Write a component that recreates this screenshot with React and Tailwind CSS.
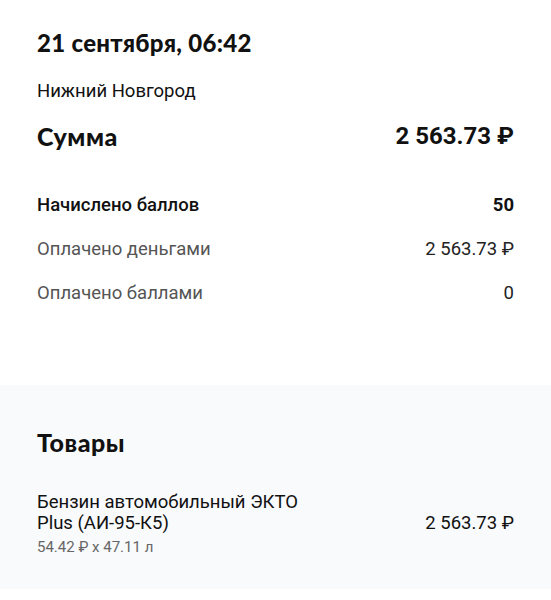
import React from 'react';

const rows = [
  { label: 'Начислено баллов', value: '50', strong: true },
  { label: 'Оплачено деньгами', value: '2 563.73 ₽' },
  { label: 'Оплачено баллами', value: '0' },
];

const heading = { fontFamily: 'Lato, "DejaVu Sans", sans-serif' };

export default function App() {
  return (
    <div className="min-h-[600px] bg-white text-[#111]" style={{ fontFamily: 'Roboto, "Noto Sans", sans-serif' }}>
      <div className="px-[37px] pt-[27px]">
        {/* Date */}
        <h1 className="text-[24px] leading-[32px] font-black tracking-[0.3px]" style={heading}>
          21 сентября, 06:42
        </h1>
        <p className="mt-[20px] text-[18.5px] leading-[24px]">Нижний Новгород</p>

        {/* Total */}
        <div className="mt-[18px] flex items-center justify-between">
          <span className="text-[25px] leading-[30px] font-black tracking-[0.5px]" style={heading}>Сумма</span>
          <span className="text-[24px] leading-[30px] font-bold">2 563.73 ₽</span>
        </div>

        <div className="mt-[33px] flex flex-col">
          {rows.map((r) => (
            <div key={r.label} className="flex items-center justify-between h-[44px] text-[18.5px]">
              <span className={r.strong ? 'font-medium text-[#111]' : 'text-[#555]'}>{r.label}</span>
              <span className={r.strong ? 'font-bold' : 'text-[#222]'}>{r.value}</span>
            </div>
          ))}
        </div>
      </div>

      {/* Goods */}
      <div className="mt-[69px] bg-[#f9fafc] px-[37px] pt-[42px] pb-[32px]">
        <h2 className="text-[25px] leading-[30px] font-black tracking-[0.5px]" style={heading}>Товары</h2>
        <div className="mt-[35px] flex items-start justify-between">
          <div>
            <p className="text-[18.5px] leading-[21px] w-[275px]">Бензин автомобильный ЭКТО Plus (АИ-95-К5)</p>
            <p className="mt-[3px] text-[15px] leading-[20px] text-[#666]">54.42 ₽ x 47.11 л</p>
          </div>
          <span className="mt-[21px] text-[18.5px] leading-[21px]">2 563.73 ₽</span>
        </div>
      </div>
    </div>
  );
}
